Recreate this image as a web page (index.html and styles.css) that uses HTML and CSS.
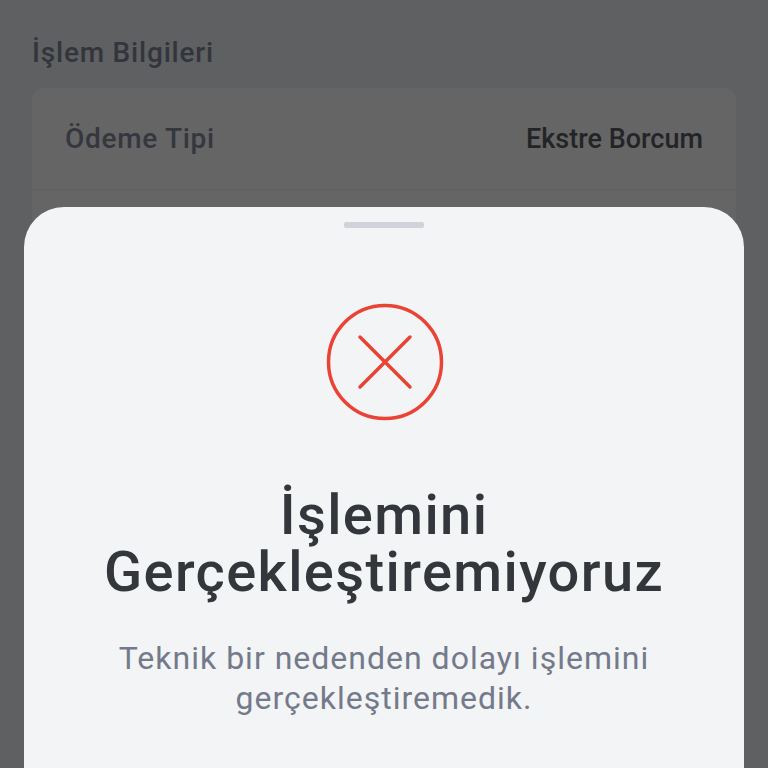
FILE: index.html
```html
<!doctype html>
<html lang="tr">

<head>
    <meta charset="UTF-8">
    <title>İşlem Bilgileri</title>
    <link rel="stylesheet" href="styles.css">
</head>

<body>
    <div class="screen">
        <h2 class="section-title">İşlem Bilgileri</h2>
        <div class="info-card">
            <div class="info-row">
                <span class="info-label">Ödeme Tipi</span>
                <span class="info-value">Ekstre Borcum</span>
            </div>
            <div class="info-row"></div>
        </div>

        <div class="sheet">
            <div class="sheet-handle"></div>
            <svg class="error-icon" width="118" height="118" viewBox="0 0 118 118" fill="none">
                <circle cx="59" cy="59" r="56.5" stroke="#ea4335" stroke-width="3.5"/>
                <path d="M34 34 L84 84 M84 34 L34 84" stroke="#ea4335" stroke-width="3.5" stroke-linecap="round"/>
            </svg>
            <h1 class="sheet-title">İşlemini Gerçekleştiremiyoruz</h1>
            <p class="sheet-text">Teknik bir nedenden dolayı işlemini gerçekleştiremedik.</p>
        </div>
    </div>
</body>

</html>
```

FILE: styles.css
```css
* {
    margin: 0;
    padding: 0;
    box-sizing: border-box;
}

body {
    width: 768px;
    height: 768px;
    overflow: hidden;
    font-family: Roboto, "Liberation Sans", sans-serif;
}

.screen {
    position: relative;
    height: 768px;
    overflow: hidden;
    padding: 36px 32px 0;
    background-color: #5f6062;
}

/* dimmed page behind the sheet */
.section-title {
    font-size: 28px;
    line-height: 34px;
    font-weight: 500;
    letter-spacing: .8px;
    color: #33353d;
}

.info-card {
    margin-top: 18px;
    background-color: #656565;
    border-radius: 12px;
}

.info-row {
    display: flex;
    justify-content: space-between;
    align-items: center;
    height: 102px;
    padding: 0 33px;
    border-bottom: 1px solid #606060;
    font-size: 28px;
    font-weight: 500;
    letter-spacing: .7px;
}

.info-label {
    color: #35373f;
}

.info-value {
    font-size: 27px;
    letter-spacing: 0;
    color: #232427;
}

/* bottom sheet */
.sheet {
    position: absolute;
    top: 207px;
    left: 24px;
    right: 24px;
    bottom: 0;
    display: flex;
    flex-direction: column;
    align-items: center;
    padding: 15px 32px 0;
    background-color: #f2f4f6;
    border-radius: 40px 40px 0 0;
    text-align: center;
}

.sheet-handle {
    width: 80px;
    height: 6px;
    background-color: #d0d3d9;
    border-radius: 2px;
}

.error-icon {
    margin-top: 75px;
    margin-left: 2px;
}

.sheet-title {
    margin-top: 66px;
    width: 620px;
    font-size: 56px;
    line-height: 57px;
    font-weight: 500;
    letter-spacing: 1.4px;
    color: #33363b;
}

.sheet-text {
    margin-top: 37px;
    width: 560px;
    font-size: 32px;
    line-height: 40px;
    letter-spacing: 1px;
    color: #747a8a;
}
```
